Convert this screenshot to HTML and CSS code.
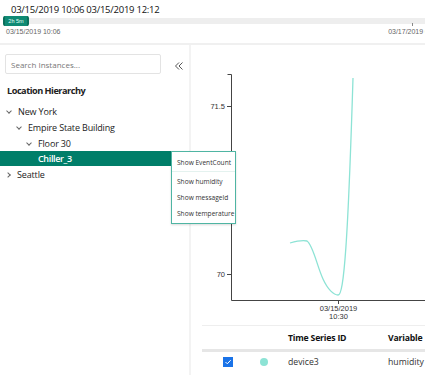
FILE: index.html
```html
<!DOCTYPE html>
<html>
<head>
<meta charset="utf-8">
<link rel="stylesheet" href="styles.css">
</head>
<body>
<div class="app">
  <header class="top">
    <div class="range-title">03/15/2019 10:06 03/15/2019 12:12</div>
    <div class="slider">
      <div class="handle">2h 5m</div>
      <div class="track"></div>
    </div>
    <div class="slider-labels">
      <span class="start-label">03/15/2019 10:06</span>
      <span class="end-label">03/17/2019 0</span>
    </div>
  </header>
  <div class="main">
    <aside class="side">
      <div class="search-row">
        <input class="search" placeholder="Search Instances...">
        <svg class="collapse" width="10" height="10" viewBox="0 0 10 10"><path d="M5 1.5 L1.5 5 L5 8.5 M8.5 1.5 L5 5 L8.5 8.5" fill="none" stroke="#555" stroke-width="1"/></svg>
      </div>
      <h2 class="hier-title">Location Hierarchy</h2>
      <ul class="tree">
        <li class="node lvl0"><span class="chev down"></span>New York</li>
        <li class="node lvl1"><span class="chev down"></span>Empire State Building</li>
        <li class="node lvl2"><span class="chev down"></span>Floor 30</li>
        <li class="node lvl3 selected">Chiller_3</li>
        <li class="node lvl0"><span class="chev right"></span>Seattle</li>
      </ul>
    </aside>
    <section class="content">
      <svg class="chart" width="235" height="275" viewBox="0 0 235 275">
        <g stroke="#444" stroke-width="1" fill="none">
          <path d="M36.5 29.5 H40.5 V255.5 H235"/>
          <path d="M36 61.5 H40"/>
          <path d="M36 229.5 H40"/>
          <path d="M147.5 255 V259"/>
        </g>
        <g font-family="'Liberation Sans', Arial, sans-serif" font-size="7.5" fill="#333">
          <text x="34" y="64" text-anchor="end">71.5</text>
          <text x="34" y="232" text-anchor="end">70</text>
          <text x="147.5" y="266" text-anchor="middle">03/15/2019</text>
          <text x="147.5" y="274" text-anchor="middle">10:30</text>
        </g>
        <path d="M99 198 C106 196 112 195 116 196 C122 200 126 221 132 234 C137 245 143 250 147 250 C153 251 157 195 162 33" fill="none" stroke="#8de3d5" stroke-width="1.3"/>
      </svg>
      <table class="grid">
        <thead>
          <tr><th class="c-check"></th><th class="c-dot"></th><th class="c-id">Time Series ID</th><th class="c-var">Variable</th></tr>
        </thead>
        <tbody>
          <tr>
            <td class="c-check"><span class="checkbox"><svg width="8" height="8" viewBox="0 0 8 8"><path d="M1.5 4 L3.3 5.8 L6.7 2.2" fill="none" stroke="#fff" stroke-width="1"/></svg></span></td>
            <td class="c-dot"><span class="dot"></span></td>
            <td class="c-id">device3</td>
            <td class="c-var">humidity</td>
          </tr>
        </tbody>
      </table>
    </section>
  </div>
  <div class="menu">
    <div class="menu-item first">Show EventCount</div>
    <div class="menu-item">Show humidity</div>
    <div class="menu-item">Show messageId</div>
    <div class="menu-item">Show temperature</div>
  </div>
</div>
</body>
</html>
```
FILE: styles.css
```css
* { box-sizing: border-box; }
html, body { margin: 0; padding: 0; background: #fff; }
body {
  font-family: "Open Sans", "Noto Sans", sans-serif;
  color: #222;
  width: 425px;
  height: 375px;
  overflow: hidden;
}
.app { position: relative; width: 425px; height: 375px; }

.top {
  height: 45px;
  border-bottom: 2px solid #f0f0f0;
  padding-top: 3px;
}
.range-title {
  font-size: 9.5px;
  letter-spacing: -0.25px;
  padding-left: 11px;
  line-height: 13px;
  color: #111;
}
.slider {
  display: flex;
  align-items: center;
  height: 10px;
  margin-left: 3px;
}
.handle {
  width: 26px;
  height: 10px;
  background: #0f8a74;
  border-left: 2px solid #0a6f5c;
  border-right: 2px solid #0a6f5c;
  border-radius: 2px;
  color: #e8fff9;
  font-size: 5.5px;
  line-height: 10px;
  text-align: center;
  font-family: "Liberation Sans", Arial, sans-serif;
}
.track { flex: 1; height: 6px; background: #eeeeee; }
.slider-labels {
  display: flex;
  justify-content: space-between;
  font-family: "Liberation Sans", Arial, sans-serif;
  font-size: 7px;
  color: #666;
  padding-left: 6px;
  line-height: 10px;
  margin-top: 1px;
  position: relative;
}
.end-label { margin-right: -4px; }
.end-label::before {
  content: "";
  position: absolute;
  right: 12px;
  top: -4px;
  width: 1px;
  height: 3px;
  background: #888;
}

.main { display: flex; height: 330px; }
.side {
  width: 191px;
  border-right: 2px solid #f3f3f3;
  flex: none;
}
.search-row {
  display: flex;
  align-items: center;
  padding: 9px 0 0 5px;
}
.search {
  width: 156px;
  height: 20px;
  border: 1px solid #e3e3e3;
  border-radius: 2px;
  font-family: inherit;
  font-size: 8px;
  padding: 0 5px;
  outline: none;
}
.search::placeholder { color: #777; }
.collapse { margin-left: 13px; margin-top: 4px; }
.hier-title {
  font-size: 9.2px;
  font-weight: 700;
  margin: 10px 0 0 7px;
  line-height: 14px;
  letter-spacing: -0.5px;
}
.tree { list-style: none; margin: 6px 0 0; padding: 0; }
.node {
  height: 16px;
  line-height: 16px;
  font-size: 9px;
  letter-spacing: -0.15px;
  color: #222;
  display: flex;
  align-items: center;
}
.lvl0 { padding-left: 6px; }
.lvl1 { padding-left: 16px; }
.lvl2 { padding-left: 26px; }
.lvl3 { padding-left: 38px; }
.node.selected {
  background: #007e69;
  color: #fff;
  font-weight: 600;
  letter-spacing: -0.35px;
  height: 15px;
  margin-top: -1px;
  margin-bottom: 1px;
}
.chev {
  width: 4px; height: 4px;
  border-right: 1px solid #666;
  border-bottom: 1px solid #666;
  margin-right: 7px;
  display: inline-block;
}
.chev.down { transform: rotate(45deg); margin-top: -3px; margin-left: 1px; }
.chev.right { transform: rotate(-45deg); margin-left: 0; }

.content { flex: 1; position: relative; overflow: hidden; }
.chart { display: block; }
.grid {
  border-collapse: collapse;
  margin: 5px 0 0 11px;
  width: 260px;
  font-size: 8.7px;
}
.grid thead tr { border-top: 1px solid #eee; border-bottom: 3px solid #e6e6e6; }
.grid th { height: 25px; text-align: left; font-weight: 700; color: #111; letter-spacing: -0.2px; }
.grid td { height: 21px; color: #333; padding-top: 1px; }
.c-check { width: 44px; text-align: center; }
.c-dot { width: 41px; text-align: left; }
.c-id { width: 100px; }
.checkbox {
  display: inline-block;
  width: 10px; height: 10px;
  background: #1a73e8;
  vertical-align: middle;
  line-height: 0;
  padding: 1px;
  margin-left: 7px;
}
.dot {
  display: inline-block;
  width: 8px; height: 8px;
  border-radius: 50%;
  background: #8de3d5;
  margin-left: 13px;
  vertical-align: middle;
}

.menu {
  position: absolute;
  left: 171px;
  top: 151px;
  width: 65px;
  background: #fff;
  border: 1px solid #4fb5a3;
  box-shadow: 0 1px 2px rgba(0,0,0,0.15);
  padding: 3px 0 1px;
}
.menu-item {
  font-size: 6.6px;
  color: #333;
  padding-left: 5px;
  line-height: 16px;
  white-space: nowrap;
}
.menu-item.first { border-bottom: 1px solid #e4f2ef; margin-bottom: 2px; }
```
